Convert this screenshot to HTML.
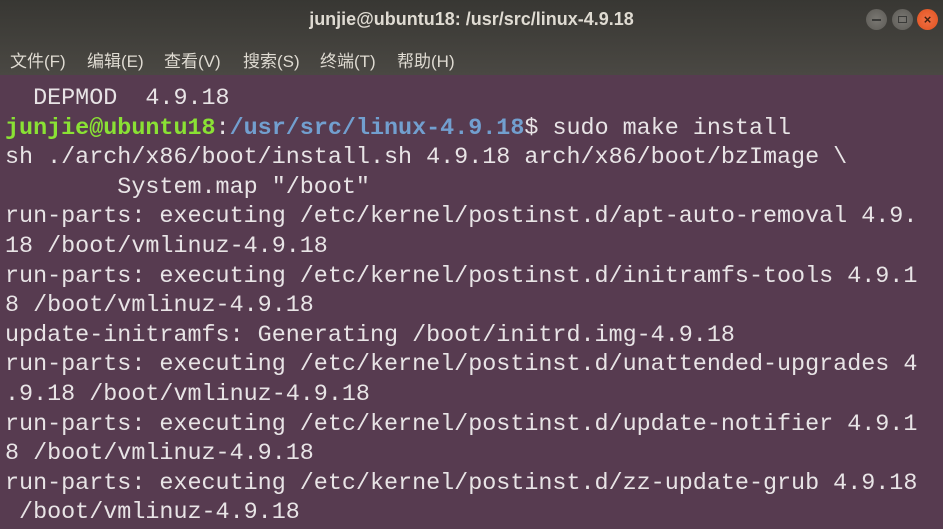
<!DOCTYPE html>
<html><head><meta charset="utf-8"><style>
html,body{margin:0;padding:0;width:943px;height:522px;overflow:hidden;background:#573b50;}
.top{position:absolute;left:0;top:0;width:943px;height:75px;background:linear-gradient(#383733,#4a4843);z-index:2}
.title{position:absolute;top:9px;left:0;width:943px;text-align:center;color:#dfdbd2;font:bold 18px "Liberation Sans","Noto Sans CJK SC",sans-serif;}
.menu{position:absolute;top:47px;left:10px;color:#dfdbd2;font:17px "Liberation Sans","Noto Sans CJK SC",sans-serif;}
.menu span{position:absolute;white-space:nowrap}
.btn{position:absolute;top:9px;width:21px;height:21px;border-radius:50%;background:radial-gradient(#7a7873,#5c5a55);}
pre{position:absolute;left:5px;top:85px;margin:0;font:23.4px/29.6px "Liberation Mono",monospace;color:#e8e4e6;}
.g{color:#8ae234;font-weight:bold}.b{color:#729fcf;font-weight:bold}
</style></head><body>
<div class="top">
<div class="title">junjie@ubuntu18: /usr/src/linux-4.9.18</div>
<div class="menu"><span style="left:0">文件(F)</span><span style="left:77px">编辑(E)</span><span style="left:154px">查看(V)</span><span style="left:233px">搜索(S)</span><span style="left:310px">终端(T)</span><span style="left:387px">帮助(H)</span></div>
<div class="btn" style="left:866px"><div style="position:absolute;left:6px;top:10px;width:9px;height:2px;background:#3a3a38"></div></div>
<div class="btn" style="left:892px"><div style="position:absolute;left:6px;top:7px;width:7px;height:5px;border:1.5px solid #3a3a38"></div></div>
<div class="btn" style="left:917px;background:radial-gradient(#f27044,#e0521f);color:#402010;font:bold 13px 'Liberation Sans';text-align:center;line-height:21px">×</div>
</div>
<pre>  DEPMOD  4.9.18
<span class="g">junjie@ubuntu18</span>:<span class="b">/usr/src/linux-4.9.18</span>$ sudo make install
sh ./arch/x86/boot/install.sh 4.9.18 arch/x86/boot/bzImage \
        System.map "/boot"
run-parts: executing /etc/kernel/postinst.d/apt-auto-removal 4.9.
18 /boot/vmlinuz-4.9.18
run-parts: executing /etc/kernel/postinst.d/initramfs-tools 4.9.1
8 /boot/vmlinuz-4.9.18
update-initramfs: Generating /boot/initrd.img-4.9.18
run-parts: executing /etc/kernel/postinst.d/unattended-upgrades 4
.9.18 /boot/vmlinuz-4.9.18
run-parts: executing /etc/kernel/postinst.d/update-notifier 4.9.1
8 /boot/vmlinuz-4.9.18
run-parts: executing /etc/kernel/postinst.d/zz-update-grub 4.9.18
 /boot/vmlinuz-4.9.18</pre>
</body></html>
